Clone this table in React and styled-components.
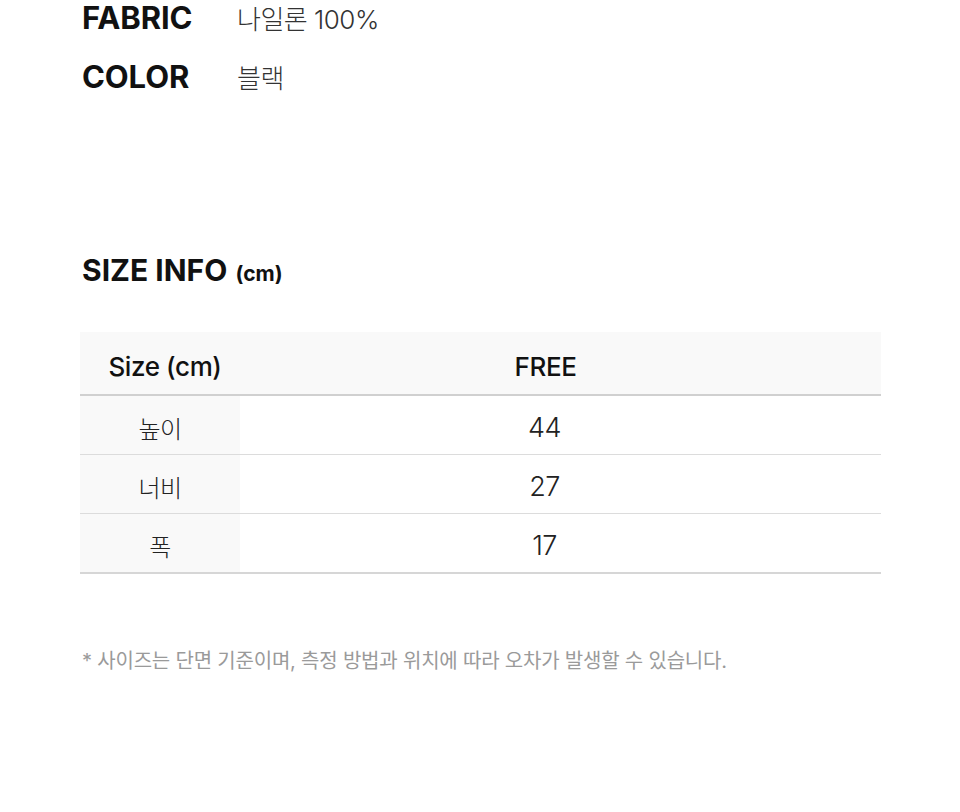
import React from "react";
import styled, { createGlobalStyle } from "styled-components";

const Global = createGlobalStyle`
  html, body { margin: 0; padding: 0; background: #fff; }
  body { font-family: "Inter", "Noto Sans CJK KR", sans-serif; color: #111; }
`;

const Page = styled.div`
  width: 960px;
  padding: 0 79px 0 80px;
  box-sizing: border-box;
`;

const SpecList = styled.dl`
  margin: 0;
  display: grid;
  grid-template-columns: 157px 1fr;
  row-gap: 21px;
  align-items: baseline;
`;

const SpecLabel = styled.dt`
  font-size: 31px;
  font-weight: 700;
  letter-spacing: -0.1px;
  line-height: 36px;
  padding-left: 2px;
  color: #111;
`;

const SpecValue = styled.dd`
  margin: 0;
  font-size: 26px;
  font-weight: 300;
  letter-spacing: -0.5px;
  color: #333;
  line-height: 36px;
`;

const SectionTitle = styled.h2`
  margin: 155px 0 0;
  padding-left: 2px;
  font-size: 30px;
  font-weight: 700;
  letter-spacing: 0;
  line-height: 36px;
  color: #111;
`;

const Unit = styled.span`
  font-size: 21px;
  font-weight: 700;
  margin-left: 1px;
`;

const Table = styled.div`
  margin-top: 40px;
  width: 801px;
  display: grid;
  grid-template-columns: 160px 1fr;
  border-bottom: 2px solid #d6d6d6;
`;

const HeadCell = styled.div`
  box-sizing: border-box;
  height: 64px;
  padding-top: 6px;
  background: #f9f9f9;
  border-bottom: 2px solid #d0d0d0;
  display: flex;
  align-items: center;
  justify-content: center;
  font-size: 26px;
  font-weight: 500;
  letter-spacing: -0.4px;
  color: #111;
  padding-left: ${(p) => (p.$first ? "10px" : "0")};
  padding-right: ${(p) => (p.$first ? "0" : "30px")};
`;

const Cell = styled.div`
  box-sizing: border-box;
  height: ${(p) => (p.$firstRow ? "58px" : "59px")};
  padding-top: 4px;
  display: flex;
  align-items: center;
  justify-content: center;
  font-size: ${(p) => (p.$label ? "24px" : "27px")};
  font-weight: 300;
  letter-spacing: -0.5px;
  color: #222;
  background: ${(p) => (p.$label ? "#f9f9f9" : "#fff")};
  border-top: ${(p) => (p.$firstRow ? "none" : "1px solid #dcdcdc")};
  padding-right: ${(p) => (p.$label ? "0" : "32px")};
`;

const Note = styled.p`
  margin: 75px 0 0;
  padding-left: 2px;
  font-size: 20px;
  font-weight: 400;
  color: #9a9a9a;
  letter-spacing: -0.2px;
  line-height: 24px;
`;

const specs = [
  ["FABRIC", "나일론 100%"],
  ["COLOR", "블랙"],
];

const rows = [
  ["높이", "44"],
  ["너비", "27"],
  ["폭", "17"],
];

export default function App() {
  return (
    <>
      <Global />
      <Page>
        <SpecList>
          {specs.map(([k, v]) => (
            <React.Fragment key={k}>
              <SpecLabel>{k}</SpecLabel>
              <SpecValue>{v}</SpecValue>
            </React.Fragment>
          ))}
        </SpecList>
        <SectionTitle>
          SIZE INFO <Unit>(cm)</Unit>
        </SectionTitle>
        <Table>
          <HeadCell $first>Size (cm)</HeadCell>
          <HeadCell>FREE</HeadCell>
          {rows.map(([k, v], i) => (
            <React.Fragment key={k}>
              <Cell $label $firstRow={i === 0}>{k}</Cell>
              <Cell $firstRow={i === 0}>{v}</Cell>
            </React.Fragment>
          ))}
        </Table>
        <Note>* 사이즈는 단면 기준이며, 측정 방법과 위치에 따라 오차가 발생할 수 있습니다.</Note>
      </Page>
    </>
  );
}
